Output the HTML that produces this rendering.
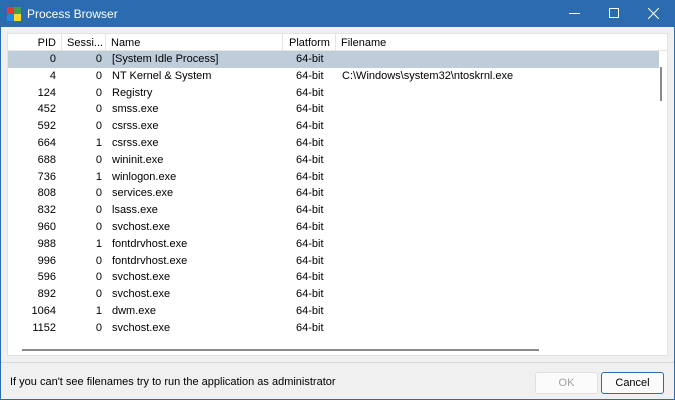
<!DOCTYPE html><html><head><style>
*{margin:0;padding:0;box-sizing:border-box}
body{width:675px;height:400px;background:#f0f0f0;font-family:"Liberation Sans",sans-serif;font-size:11px;color:#000;position:relative;overflow:hidden}
.frame{position:absolute;left:0;top:0;width:675px;height:400px;border:1px solid #2b6cb0;pointer-events:none}
.tb{position:absolute;left:0;top:0;width:675px;height:27px;background:#2b6cb0;color:#fff;font-size:12px}
.list{position:absolute;left:7px;top:33px;width:661px;height:323px;background:#fff;border:1px solid #e3e3e3}
.hdr{position:absolute;left:0;top:0;width:660px;height:17px;border-bottom:1px solid #e5e5e5}
.c{position:absolute;white-space:nowrap}
.row{position:absolute;left:0;width:651px;height:16.8px;line-height:16.8px}
.sel{background:#bfcddb}
.sep{position:absolute;top:0;width:1px;height:17px;background:#e5e5e5}
.btn{position:absolute;top:372px;height:22px;width:63px;text-align:center;line-height:20px;font-size:11px;border:1px solid #ccc;background:#fbfbfb;border-radius:3px}
</style></head><body>
<div class="tb">
<svg style="position:absolute;left:7px;top:7px" width="14" height="14"><rect x="0" y="0" width="7" height="7" fill="#e53935"/><rect x="7" y="0" width="7" height="7" fill="#43a047"/><rect x="0" y="7" width="7" height="7" fill="#1e88e5"/><rect x="7" y="7" width="7" height="7" fill="#fdd835"/></svg>
<div style="position:absolute;left:27px;top:7px">Process Browser</div>
<div style="position:absolute;left:569px;top:13px;width:11px;height:1px;background:#fff"></div>
<div style="position:absolute;left:609px;top:8px;width:10px;height:10px;border:1px solid #fff"></div>
<svg style="position:absolute;left:648px;top:8px" width="11" height="11"><path d="M0 0L11 11M11 0L0 11" stroke="#fff" stroke-width="1"/></svg>
</div>
<div class="list">
<div class="hdr">
<div class="c" style="right:612px;top:3px">PID</div><div class="sep" style="left:53px"></div>
<div class="c" style="left:59px;top:3px">Sessi...</div><div class="sep" style="left:97px"></div>
<div class="c" style="left:103px;top:3px">Name</div><div class="sep" style="left:274px"></div>
<div class="c" style="left:281px;top:3px">Platform</div><div class="sep" style="left:327px"></div>
<div class="c" style="left:333px;top:3px">Filename</div>
</div>
<div id="rows"></div>
<div style="position:absolute;left:652px;top:33px;width:2px;height:34px;background:#8a8a8a"></div>
<div style="position:absolute;left:14px;top:315px;width:517px;height:2px;background:#8a8a8a"></div>
</div>
<div style="position:absolute;left:0;top:362px;width:675px;height:1px;background:#d8d8d8"></div>
<div style="position:absolute;left:10px;top:376px">If you can't see filenames try to run the application as administrator</div>
<div class="btn" style="left:535px;color:#a0a0a0;border-color:#e0e0e0">OK</div>
<div class="btn" style="left:601px;border:1px solid #2b6cb0">Cancel</div>
<div class="frame"></div>
<script>
var d=[[0,0,"[System Idle Process]"],[4,0,"NT Kernel &amp; System"],[124,0,"Registry"],[452,0,"smss.exe"],[592,0,"csrss.exe"],[664,1,"csrss.exe"],[688,0,"wininit.exe"],[736,1,"winlogon.exe"],[808,0,"services.exe"],[832,0,"lsass.exe"],[960,0,"svchost.exe"],[988,1,"fontdrvhost.exe"],[996,0,"fontdrvhost.exe"],[596,0,"svchost.exe"],[892,0,"svchost.exe"],[1064,1,"dwm.exe"],[1152,0,"svchost.exe"]];
var h="";d.forEach(function(r,i){h+='<div class="row'+(i==0?' sel':'')+'" style="top:'+(17+i*16.8)+'px"><div class="c" style="right:603px">'+r[0]+'</div><div class="c" style="right:557px">'+r[1]+'</div><div class="c" style="left:104px">'+r[2]+'</div><div class="c" style="left:288px">64-bit</div>'+(i==1?'<div class="c" style="left:334px">C:\\Windows\\system32\\ntoskrnl.exe</div>':'')+'</div>'});
document.getElementById("rows").innerHTML=h;
</script>
</body></html>
